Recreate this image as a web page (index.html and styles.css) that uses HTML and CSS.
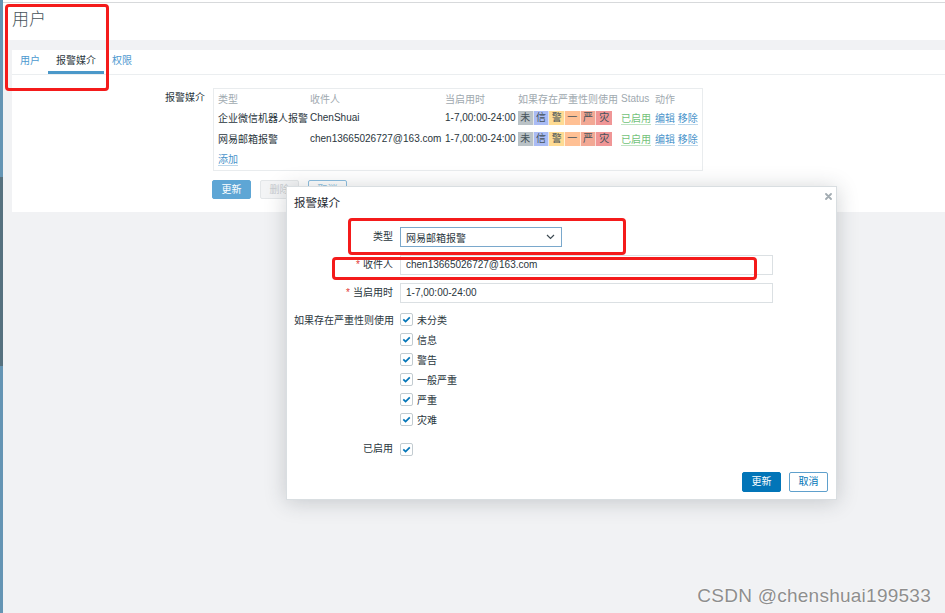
FILE: index.html
```html
<!DOCTYPE html>
<html lang="zh">
<head>
<meta charset="utf-8">
<title>用户</title>
<link rel="stylesheet" href="styles.css">
</head>
<body>
<div class="app">
  <aside class="sidebar"></aside>
  <main class="main">
    <header class="page-header"><h1>用户</h1></header>
    <section class="content">
      <div class="panel">
        <nav class="tabs">
          <a class="tab">用户</a>
          <a class="tab active">报警媒介</a>
          <a class="tab">权限</a>
        </nav>
        <div class="panel-body">
          <div class="form-label">报警媒介</div>
          <div class="media-box">
            <table class="media-table">
              <colgroup>
                <col class="c1"><col class="c2"><col class="c3"><col class="c4"><col class="c5"><col class="c6">
              </colgroup>
              <thead>
                <tr><th>类型</th><th>收件人</th><th>当启用时</th><th>如果存在严重性则使用</th><th>Status</th><th>动作</th></tr>
              </thead>
              <tbody>
                <tr>
                  <td>企业微信机器人报警</td>
                  <td>ChenShuai</td>
                  <td>1-7,00:00-24:00</td>
                  <td><div class="sev"><span class="s0">未</span><span class="s1">信</span><span class="s2">警</span><span class="s3">一</span><span class="s4">严</span><span class="s5">灾</span></div></td>
                  <td><a class="link-green">已启用</a></td>
                  <td><a class="link">编辑</a> <a class="link">移除</a></td>
                </tr>
                <tr>
                  <td>网易邮箱报警</td>
                  <td>chen13665026727@163.com</td>
                  <td>1-7,00:00-24:00</td>
                  <td><div class="sev"><span class="s0">未</span><span class="s1">信</span><span class="s2">警</span><span class="s3">一</span><span class="s4">严</span><span class="s5">灾</span></div></td>
                  <td><a class="link-green">已启用</a></td>
                  <td><a class="link">编辑</a> <a class="link">移除</a></td>
                </tr>
                <tr class="add-row"><td colspan="6"><a class="link">添加</a></td></tr>
              </tbody>
            </table>
          </div>
          <div class="form-label"></div>
          <div class="btns">
            <button class="btn btn-main">更新</button>
            <button class="btn btn-disabled">删除</button>
            <button class="btn btn-outline">取消</button>
          </div>
        </div>
      </div>
    </section>
  </main>
</div>

<div class="dialog">
  <div class="dialog-head">报警媒介</div>
  <span class="dialog-close">
    <svg width="7" height="7" viewBox="0 0 7 7"><path d="M1 1L6 6M6 1L1 6" stroke="#a3acb2" stroke-width="1.8" stroke-linecap="round"/></svg>
  </span>
  <div class="dialog-form">
    <div class="d-label">类型</div>
    <div class="d-field">
      <div class="select"><span>网易邮箱报警</span>
        <svg width="9" height="6" viewBox="0 0 9 6"><path d="M1 1L4.5 4.5L8 1" stroke="#3d4a52" stroke-width="1.2" fill="none"/></svg>
      </div>
    </div>
    <div class="d-label"><span class="req">*</span>收件人</div>
    <div class="d-field"><div class="input">chen13665026727@163.com</div></div>
    <div class="d-label"><span class="req">*</span>当启用时</div>
    <div class="d-field"><div class="input">1-7,00:00-24:00</div></div>
    <div class="d-label">如果存在严重性则使用</div>
    <div class="d-field checklist">
      <label class="check"><span class="box"><svg width="11" height="11" viewBox="0 0 11 11"><path d="M2.3 5.3L4.6 7.6L8.8 3.4" stroke="#0275b8" stroke-width="1.7" fill="none"/></svg></span>未分类</label>
      <label class="check"><span class="box"><svg width="11" height="11" viewBox="0 0 11 11"><path d="M2.3 5.3L4.6 7.6L8.8 3.4" stroke="#0275b8" stroke-width="1.7" fill="none"/></svg></span>信息</label>
      <label class="check"><span class="box"><svg width="11" height="11" viewBox="0 0 11 11"><path d="M2.3 5.3L4.6 7.6L8.8 3.4" stroke="#0275b8" stroke-width="1.7" fill="none"/></svg></span>警告</label>
      <label class="check"><span class="box"><svg width="11" height="11" viewBox="0 0 11 11"><path d="M2.3 5.3L4.6 7.6L8.8 3.4" stroke="#0275b8" stroke-width="1.7" fill="none"/></svg></span>一般严重</label>
      <label class="check"><span class="box"><svg width="11" height="11" viewBox="0 0 11 11"><path d="M2.3 5.3L4.6 7.6L8.8 3.4" stroke="#0275b8" stroke-width="1.7" fill="none"/></svg></span>严重</label>
      <label class="check"><span class="box"><svg width="11" height="11" viewBox="0 0 11 11"><path d="M2.3 5.3L4.6 7.6L8.8 3.4" stroke="#0275b8" stroke-width="1.7" fill="none"/></svg></span>灾难</label>
    </div>
    <div class="d-label enabled-row">已启用</div>
    <div class="d-field enabled-row">
      <label class="check"><span class="box"><svg width="11" height="11" viewBox="0 0 11 11"><path d="M2.3 5.3L4.6 7.6L8.8 3.4" stroke="#0275b8" stroke-width="1.7" fill="none"/></svg></span></label>
    </div>
  </div>
  <div class="dialog-foot">
    <button class="btn btn-primary">更新</button>
    <button class="btn btn-cancel">取消</button>
  </div>
</div>

<div class="mark mark-1"></div>
<div class="mark mark-2"></div>
<div class="mark mark-3"></div>

<div class="watermark">CSDN @chenshuai199533</div>
</body>
</html>
```

FILE: styles.css
```css
* { box-sizing: border-box; }
html, body { margin: 0; padding: 0; }
body {
  width: 945px;
  height: 613px;
  overflow: hidden;
  position: relative;
  font-family: "Liberation Sans", "Noto Sans CJK SC", sans-serif;
  font-size: 10px;
  color: #2a363d;
  background: #f1f2f4;
}
.app { display: flex; height: 613px; }
.sidebar {
  width: 3px;
  flex: none;
  background: linear-gradient(to bottom, #6595b4 0, #6595b4 177px, #56717f 177px, #56717f 366px, #6595b4 366px);
}
.main {
  flex: 1;
  display: flex;
  flex-direction: column;
  padding-top: 2px;
  background: linear-gradient(#ffffff 0, #ffffff 2px, #f1f2f4 2px);
}
.page-header {
  height: 38px;
  background: #fff;
  border-top: 1px solid #d7d9db;
  padding: 7px 9px 0;
}
.page-header h1 {
  margin: 0;
  font-size: 17px;
  line-height: 20px;
  font-weight: 300;
  color: #47535b;
}
.content { padding: 10px 0 0 9px; }
.panel { background: #fff; }
.tabs {
  display: flex;
  height: 25px;
  border-bottom: 1px solid #ebeef0;
}
.tab {
  padding: 0 8px;
  height: 24px;
  line-height: 21px;
  border-bottom: 3px solid transparent;
  color: #4c98cf;
}
.tab.active { color: #2a363d; border-bottom-color: #4b98c9; }
.panel-body {
  display: grid;
  grid-template-columns: 193px 490px;
  column-gap: 8px;
  row-gap: 9px;
  padding: 13px 0 13px;
}
.form-label { text-align: right; line-height: 20px; }
.media-box {
  width: 490px;
  border: 1px solid #e9ecee;
  padding-bottom: 3px;
}
.media-table {
  width: 488px;
  border-collapse: collapse;
  table-layout: fixed;
}
.media-table col.c1 { width: 91px; }
.media-table col.c2 { width: 135px; }
.media-table col.c3 { width: 73px; }
.media-table col.c4 { width: 103px; }
.media-table col.c5 { width: 34px; }
.media-table col.c6 { width: 52px; }
.media-table th, .media-table td {
  padding: 0 0 0 5px;
  white-space: nowrap;
  overflow: visible;
  text-align: left;
  font-weight: normal;
}
.media-table th:first-child, .media-table td:first-child { padding-left: 4px; }
.media-table th { height: 18px; color: #a0a9af; }
.media-table td { height: 21px; }
.media-table .add-row td { height: 18px; }
.sev {
  display: grid;
  grid-template-columns: repeat(6, 1fr);
  width: 94px;
  height: 14px;
  line-height: 14px;
  text-align: center;
  color: #45525a;
}
.sev span { border-right: 1px solid rgba(255,255,255,0.6); }
.sev span:last-child { border-right: none; }
.s0 { background: #bac2c6; }
.s1 { background: #a9bbf4; }
.s2 { background: #fedb93; }
.s3 { background: #ffc094; }
.s4 { background: #f2a894; }
.s5 { background: #f09696; }
.link {
  color: #4a94cb;
  border-bottom: 1px solid #bcd7ea;
}
.link-green {
  color: #72c279;
  border-bottom: 1px solid #bfe3c2;
}
.btns { display: flex; gap: 9px; margin-left: -1px; }
.btn {
  width: 39px;
  height: 19px;
  padding: 0;
  border: 1px solid transparent;
  border-radius: 2px;
  font-family: "Liberation Sans", "Noto Sans CJK SC", sans-serif;
  font-size: 10px;
  line-height: 17px;
}
.btn-main { background: #5ea6d5; border-color: #5ea6d5; color: #fff; }
.btn-disabled { background: #f3f4f5; border-color: #e3e6e8; color: #c9cdd0; }
.btn-outline { background: #fff; border-color: #8ebfe0; color: #8ebfe0; }

.dialog {
  position: absolute;
  left: 286px;
  top: 186px;
  width: 551px;
  height: 314px;
  background: #fff;
  border: 1px solid #d9dee1;
  box-shadow: 0 2px 20px rgba(40, 50, 60, 0.22);
  display: flex;
  flex-direction: column;
}
.dialog-head {
  height: 33px;
  padding: 9px 7px 0;
  font-size: 11.5px;
  line-height: 14px;
  color: #1f2c33;
}
.dialog-close {
  position: absolute;
  left: 538px;
  top: 6px;
  width: 7px;
  height: 7px;
  display: flex;
}
.dialog-form {
  display: grid;
  grid-template-columns: 99px 373px;
  column-gap: 7px;
  row-gap: 8px;
  padding: 7px 8px 0 7px;
}
.d-label { text-align: right; line-height: 20px; white-space: nowrap; }
.req { color: #e33734; margin-right: 3px; }
.select {
  width: 162px;
  height: 20px;
  border: 1px solid #7aa8cc;
  padding: 0 6px 0 5px;
  display: flex;
  align-items: center;
  justify-content: space-between;
}
.input {
  width: 373px;
  height: 20px;
  border: 1px solid #dbe0e3;
  padding: 0 5px;
  line-height: 18px;
}
.checklist { display: flex; flex-direction: column; margin-top: -2px; }
.check {
  display: flex;
  align-items: center;
  height: 20px;
  gap: 4px;
}
.box {
  width: 13px;
  height: 13px;
  border: 1px solid #c3ccd1;
  border-radius: 2px;
  background: #fff;
  display: flex;
  align-items: center;
  justify-content: center;
}
.enabled-row { margin-top: 2px; }
.dialog-foot {
  margin-top: auto;
  display: flex;
  justify-content: flex-end;
  gap: 8px;
  padding: 0 8px 7px;
}
.dialog-foot .btn { height: 20px; line-height: 18px; }
.btn-primary { background: #0275b8; border-color: #0275b8; color: #fff; }
.btn-cancel { background: #fff; border-color: #5fa0cc; color: #0275b8; }

.mark {
  position: absolute;
  border: 3px solid #f41b1b;
  border-radius: 4px;
}
.mark-1 { left: 5px; top: 4px; width: 104px; height: 87px; }
.mark-2 { left: 348px; top: 218px; width: 278px; height: 37px; }
.mark-3 { left: 332px; top: 257px; width: 425px; height: 23px; }

.watermark {
  position: absolute;
  right: 14px;
  top: 585px;
  font-family: "Liberation Sans", sans-serif;
  font-size: 19px;
  letter-spacing: 0.25px;
  color: #8e8e8e;
  text-shadow: 0 0 1px #ffffff, 0 0 2px #ffffff;
  line-height: 22px;
}
```
